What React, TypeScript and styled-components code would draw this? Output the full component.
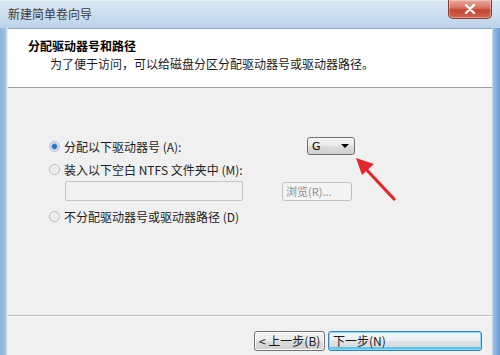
import React from "react";
import styled, { createGlobalStyle } from "styled-components";

const GlobalStyle = createGlobalStyle`
  html, body {
    margin: 0;
    padding: 0;
    background: #f0f0f0;
  }
  body {
    font-family: "Noto Sans CJK SC", "DejaVu Sans", sans-serif;
    font-size: 12px;
    color: #1e1e1e;
  }
`;

const WIN_FONT = `"Noto Sans CJK SC", "DejaVu Sans", sans-serif`;

export default function App() {
  return (
    <>
      <GlobalStyle />
      <Window>
        <TitleBar>
          <TitleText>新建简单卷向导</TitleText>
          <CloseBtn aria-label="close">
            <svg width="12" height="10" viewBox="0 0 12 10">
              <path d="M2 1 L10 9 M10 1 L2 9" stroke="#fff" strokeWidth="2.4" strokeLinecap="round" />
            </svg>
          </CloseBtn>
        </TitleBar>
        <Frame>
          <Client>
            <Header>
              <HeaderTitle>分配驱动器号和路径</HeaderTitle>
              <HeaderSub>为了便于访问，可以给磁盘分区分配驱动器号或驱动器路径。</HeaderSub>
            </Header>
            <Body>
              <Options>
                <Row>
                  <Radio>
                    <Dot $checked />
                    分配以下驱动器号 (A):
                  </Radio>
                  <Combo>
                    <span>G</span>
                    <Caret />
                  </Combo>
                </Row>
                <Row>
                  <Radio>
                    <Dot />
                    装入以下空白 NTFS 文件夹中 (M):
                  </Radio>
                </Row>
                <InputRow>
                  <TextField />
                  <SmallBtn disabled>浏览(R)...</SmallBtn>
                </InputRow>
                <Row>
                  <Radio>
                    <Dot />
                    不分配驱动器号或驱动器路径 (D)
                  </Radio>
                </Row>
              </Options>
            </Body>
            <Footer>
              <FootBtn>&lt; 上一步(B)</FootBtn>
              <FootBtn $primary>下一步(N)</FootBtn>
            </Footer>
          </Client>
        </Frame>
        <Arrow width="60" height="60" viewBox="0 0 60 60">
          <path d="M44 49 L14 17" stroke="#e3262a" strokeWidth="3.2" strokeLinecap="round" />
          <path d="M6 8 L24 14 L12 25 Z" fill="#e3262a" />
        </Arrow>
      </Window>
    </>
  );
}

const Window = styled.div`
  position: relative;
  width: 500px;
  height: 355px;
  overflow: hidden;
  display: flex;
  flex-direction: column;
  background: linear-gradient(180deg, #cfdff0 0px, #b9d1ea 28px, #a9c6e5 100%);
`;

const TitleBar = styled.div`
  height: 28px;
  flex: 0 0 28px;
  display: flex;
  align-items: flex-start;
  justify-content: space-between;
  padding-left: 8px;
  background: linear-gradient(180deg, #dbe7f4 0%, #c9dcef 60%, #bcd2ea 100%);
  border-top: 1px solid #e9f1f9;
  box-sizing: border-box;
`;

const TitleText = styled.div`
  font-family: ${WIN_FONT};
  font-size: 12px;
  line-height: 12px;
  margin-top: 7px;
  color: #3a3a3a;
`;

const CloseBtn = styled.div`
  width: 44px;
  height: 19px;
  margin-right: 8px;
  margin-top: -1px;
  display: flex;
  align-items: center;
  justify-content: center;
  border: 1px solid #8a3b32;
  border-top: none;
  border-radius: 0 0 5px 5px;
  background: linear-gradient(180deg, #e9a99c 0%, #d8705f 45%, #c4442f 55%, #d2674f 100%);
  box-shadow: inset 0 0 0 1px rgba(255, 255, 255, 0.35);
  box-sizing: border-box;
`;

const Frame = styled.div`
  flex: 1;
  display: flex;
  padding: 0 8px 0 8px;
  background: linear-gradient(90deg, #8cb1da 0px, #a5c3e3 6px, #e4eef8 7px, #e4eef8 8px, transparent 8px),
    linear-gradient(270deg, #6d9bd1 0px, #9bbfe4 7px, #e4eef8 8px, transparent 8px), #b9d1ea;
`;

const Client = styled.div`
  flex: 1;
  display: flex;
  flex-direction: column;
  background: #f0f0f0;
  border-top: 1px solid #8ea6c0;
`;

const Header = styled.div`
  height: 59px;
  flex: 0 0 59px;
  box-sizing: border-box;
  background: #ffffff;
  border-bottom: 1px solid #a0a0a0;
  padding: 8px 0 0 20px;
`;

const HeaderTitle = styled.div`
  font-family: ${WIN_FONT};
  font-size: 12px;
  font-weight: 700;
  line-height: 18px;
  color: #000;
`;

const HeaderSub = styled.div`
  font-family: ${WIN_FONT};
  font-size: 12px;
  line-height: 17px;
  margin-left: 22px;
  color: #1a1a1a;
`;

const Body = styled.div`
  flex: 1;
  border-bottom: 1px solid #bdbdbd;
  box-shadow: 0 1px 0 #ffffff;
  padding: 47px 0 0 41px;
`;

const Options = styled.div`
  width: 306px;
  display: flex;
  flex-direction: column;
`;

const Row = styled.div`
  display: flex;
  align-items: center;
  justify-content: space-between;
  height: 22px;
  margin-bottom: 1px;
`;

const Radio = styled.label`
  display: flex;
  align-items: center;
  gap: 4px;
  font-family: ${WIN_FONT};
  font-size: 12px;
  color: #1e1e1e;
`;

const Dot = styled.span<{ $checked?: boolean }>`
  width: 11px;
  height: 11px;
  border-radius: 50%;
  box-sizing: border-box;
  border: 1px solid #b4b9c0;
  background: ${({ $checked }) =>
    $checked
      ? "radial-gradient(circle, #1f5ea8 0, #3f86d4 2.5px, #dde9f5 3.5px, #f4f6f8 100%)"
      : "radial-gradient(circle, #e4e6ea 0, #eef0f2 60%, #f8f9fa 100%)"};
`;

const Combo = styled.div`
  width: 48px;
  height: 18px;
  box-sizing: border-box;
  border: 1px solid #707070;
  border-radius: 3px;
  background: linear-gradient(180deg, #f4f4f4 0%, #ebebeb 49%, #dddddd 51%, #cfcfcf 100%);
  display: flex;
  align-items: center;
  justify-content: space-between;
  padding: 0 5px 0 4px;
  font-family: "DejaVu Sans", sans-serif;
  font-size: 11px;
  color: #000;
`;

const Caret = styled.span`
  width: 0;
  height: 0;
  border-left: 4px solid transparent;
  border-right: 4px solid transparent;
  border-top: 4px solid #000;
`;

const InputRow = styled.div`
  display: flex;
  align-items: center;
  justify-content: space-between;
  padding-left: 16px;
  padding-right: 3px;
  height: 20px;
  margin-bottom: 4px;
`;

const TextField = styled.div`
  width: 178px;
  height: 20px;
  box-sizing: border-box;
  background: #f0f0f0;
  border: 1px solid #c5c5c5;
  border-radius: 2px;
`;

const SmallBtn = styled.button`
  width: 70px;
  height: 19px;
  box-sizing: border-box;
  border: 1px solid #c0c0c0;
  border-radius: 3px;
  background: #f4f4f4;
  font-family: ${WIN_FONT};
  font-size: 11px;
  color: #8d8d8d;
  padding: 0;
  text-align: left;
  padding-left: 3px;
  line-height: 15px;
`;

const Footer = styled.div`
  height: 39px;
  flex: 0 0 39px;
  display: flex;
  align-items: flex-start;
  justify-content: flex-end;
  gap: 3px;
  padding: 15px 10px 0 0;
  box-sizing: border-box;
`;

const FootBtn = styled.button<{ $primary?: boolean }>`
  height: 20px;
  width: ${({ $primary }) => ($primary ? "154px" : "71px")};
  box-sizing: border-box;
  padding: 0 0 0 4px;
  text-align: left;
  font-family: ${WIN_FONT};
  font-size: 12px;
  line-height: 16px;
  color: #1a1a1a;
  border-radius: 3px;
  border: 1px solid ${({ $primary }) => ($primary ? "#3c7fb1" : "#707070")};
  background: ${({ $primary }) =>
    $primary
      ? "linear-gradient(180deg, #f4f7f9 0%, #ebeef0 49%, #dfe3e6 51%, #d3d8db 100%)"
      : "linear-gradient(180deg, #f2f2f2 0%, #ebebeb 49%, #dddddd 51%, #cfcfcf 100%)"};
  box-shadow: ${({ $primary }) =>
    $primary ? "inset 0 0 0 1px #7fdcfb, inset 0 -2px 0 1px #5fc4ee" : "inset 0 0 0 1px #fcfcfc"};
`;

const Arrow = styled.svg`
  position: absolute;
  left: 350px;
  top: 150px;
`;
